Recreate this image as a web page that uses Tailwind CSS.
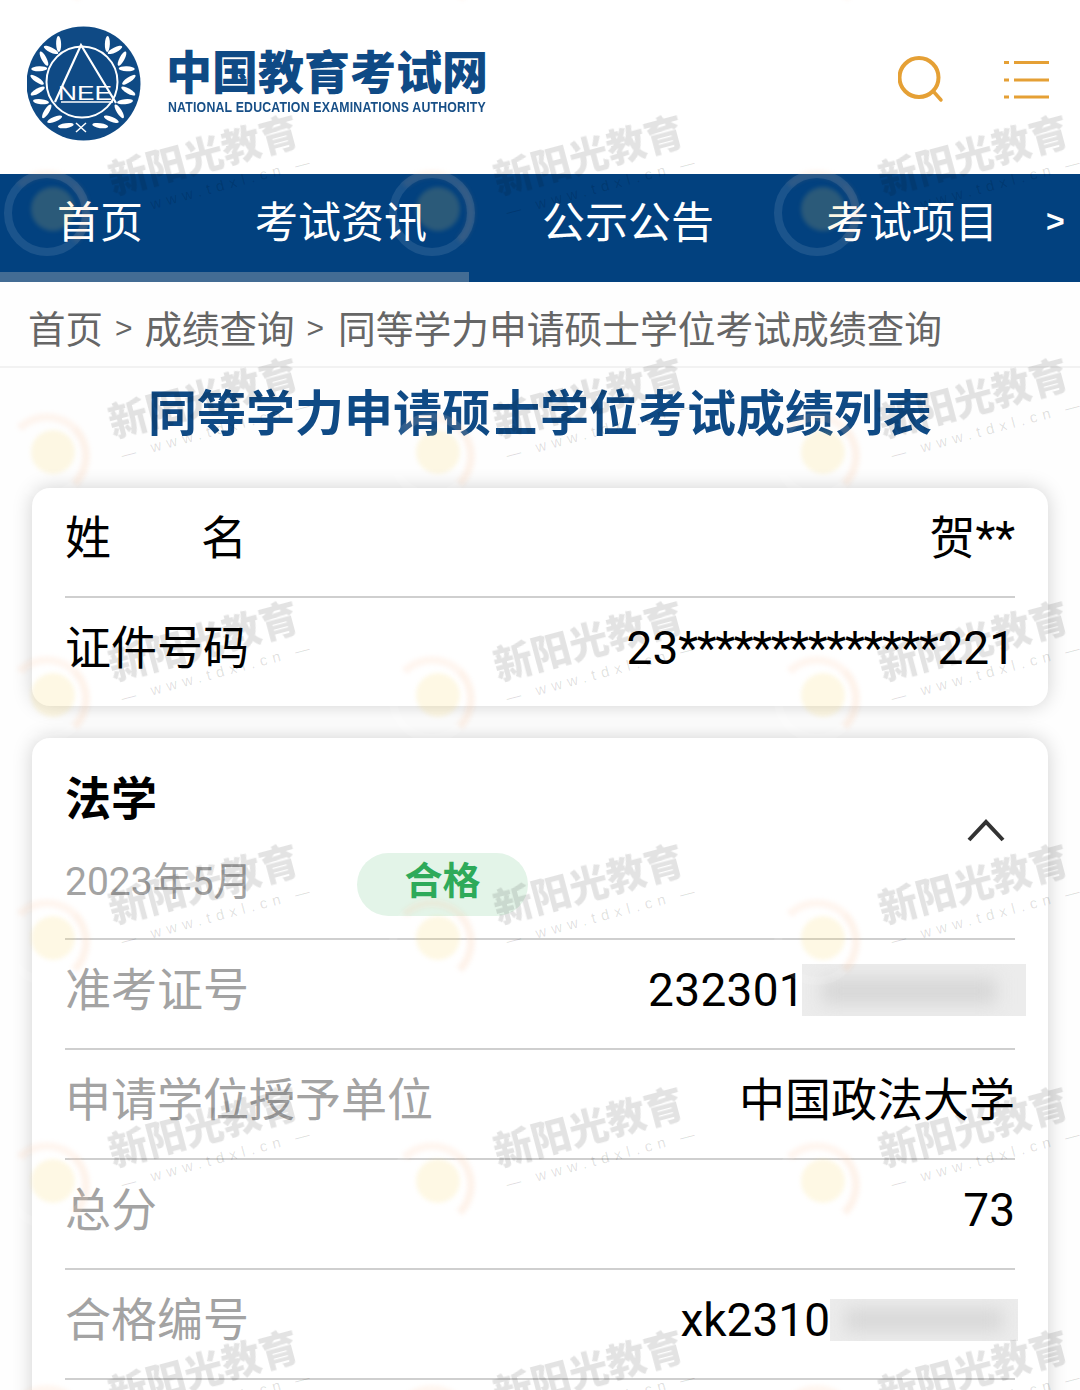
<!DOCTYPE html>
<html lang="zh-CN">
<head>
    <meta charset="UTF-8">
    <title>中国教育考试网 - 成绩查询</title>
    <script src="https://cdn.jsdelivr.net/npm/@tailwindcss/browser@4"></script>
</head>
<body class="bg-white">
<div class="relative w-[1080px] h-[1390px] overflow-hidden bg-[#fefefe] font-['Roboto','Noto_Sans_CJK_SC',sans-serif] text-black">

    <!-- 页头 -->
    <header class="h-[174px] flex items-start justify-between bg-white">
        <div class="flex items-start pl-[27px] pt-[26px]">
            <svg class="w-[114px] h-[116px]" viewBox="27 26 114 116">
                <circle cx="83.500" cy="83.500" r="57" fill="#0f4a85"/>
                <circle cx="82" cy="82" r="35.500" fill="none" stroke="#fff" stroke-width="2"/>
                <g fill="#fff" transform="translate(-1 -1)">
                    <ellipse cx="84" cy="38" rx="2.500" ry="8" transform="rotate(-32 84 84) rotate(30 84 38)"/>
                    <ellipse cx="84" cy="38" rx="2.500" ry="8" transform="rotate(-44 84 84) rotate(-20 84 38)"/>
                    <ellipse cx="84" cy="38" rx="2.500" ry="8" transform="rotate(-58 84 84) rotate(30 84 38)"/>
                    <ellipse cx="84" cy="38" rx="2.500" ry="8" transform="rotate(-72 84 84) rotate(-20 84 38)"/>
                    <ellipse cx="84" cy="38" rx="2.500" ry="8" transform="rotate(-86 84 84) rotate(30 84 38)"/>
                    <ellipse cx="84" cy="38" rx="2.500" ry="8" transform="rotate(-100 84 84) rotate(-20 84 38)"/>
                    <ellipse cx="84" cy="38" rx="2.500" ry="8" transform="rotate(-114 84 84) rotate(30 84 38)"/>
                    <ellipse cx="84" cy="38" rx="2.500" ry="8" transform="rotate(-128 84 84) rotate(-20 84 38)"/>
                    <ellipse cx="84" cy="38" rx="2.500" ry="8" transform="rotate(-142 84 84) rotate(30 84 38)"/>
                    <ellipse cx="84" cy="38" rx="2.500" ry="8" transform="rotate(-158 84 84) rotate(60 84 38)"/>
                    <ellipse cx="84" cy="38" rx="2.500" ry="8" transform="rotate(32 84 84) rotate(-30 84 38)"/>
                    <ellipse cx="84" cy="38" rx="2.500" ry="8" transform="rotate(44 84 84) rotate(20 84 38)"/>
                    <ellipse cx="84" cy="38" rx="2.500" ry="8" transform="rotate(58 84 84) rotate(-30 84 38)"/>
                    <ellipse cx="84" cy="38" rx="2.500" ry="8" transform="rotate(72 84 84) rotate(20 84 38)"/>
                    <ellipse cx="84" cy="38" rx="2.500" ry="8" transform="rotate(86 84 84) rotate(-30 84 38)"/>
                    <ellipse cx="84" cy="38" rx="2.500" ry="8" transform="rotate(100 84 84) rotate(20 84 38)"/>
                    <ellipse cx="84" cy="38" rx="2.500" ry="8" transform="rotate(114 84 84) rotate(-30 84 38)"/>
                    <ellipse cx="84" cy="38" rx="2.500" ry="8" transform="rotate(128 84 84) rotate(20 84 38)"/>
                    <ellipse cx="84" cy="38" rx="2.500" ry="8" transform="rotate(142 84 84) rotate(-30 84 38)"/>
                    <ellipse cx="84" cy="38" rx="2.500" ry="8" transform="rotate(158 84 84) rotate(-60 84 38)"/>
                </g>
                <path d="M76 132l10-9M86 132l-10-9" stroke="#fff" stroke-width="1.500"/>
                <path d="M55 102L81 45L116 103" fill="none" stroke="#fff" stroke-width="2.200"/>
                <path d="M61 102H113" fill="none" stroke="#fff" stroke-width="1.500"/>
                <text x="85" y="100" text-anchor="middle" fill="#fff" font-family="Liberation Sans" font-size="21" textLength="54" lengthAdjust="spacingAndGlyphs">NEE</text>
            </svg>
            <div class="ml-[25px] pt-[15px] text-[#0f4a85]">
                <div class="w-[322px] text-[46px] leading-[56px] font-black whitespace-nowrap font-['Noto_Sans_CJK_SC',sans-serif]">中国教育考试网</div>
                <div class="mt-[1px] ml-[2px] origin-left scale-x-[0.82] text-[15px] leading-[18px] font-bold whitespace-nowrap font-['Liberation_Sans',sans-serif] tracking-[0.25px] text-[#174f87]">NATIONAL EDUCATION EXAMINATIONS AUTHORITY</div>
            </div>
        </div>
        <div class="flex items-start pt-[54px] pr-[31px]">
            <svg class="w-[48px] h-[52px] text-[#e5a035]" viewBox="0 0 48 52" fill="none" stroke="currentColor">
                <circle cx="21" cy="23.500" r="19.500" stroke-width="4"/>
                <path d="M35 37l8 9" stroke-width="3.500" stroke-linecap="round"/>
            </svg>
            <svg class="w-[46px] h-[44px] ml-[57px] mt-[3px] text-[#e5a035]" viewBox="0 0 46 44" fill="none" stroke="currentColor" stroke-width="3">
                <path d="M1 5.500h5M11 5.500h35M1 23h5M11 23h35M1 40h5M11 40h35"/>
            </svg>
        </div>
    </header>

    <!-- 导航 -->
    <nav class="relative h-[108px] bg-[#02417f] text-white font-['Noto_Sans_CJK_SC',sans-serif]">
        <div class="flex items-center h-[98px] pb-[8px] text-[43px] whitespace-nowrap">
            <a class="ml-[57px]">首页</a>
            <a class="ml-[112px]">考试资讯</a>
            <a class="ml-[115px]">公示公告</a>
            <a class="ml-[112px]">考试项目</a>
            <a class="ml-[48px] pt-[4px] text-[32px] font-bold font-['Liberation_Sans',sans-serif]">&gt;</a>
        </div>
        <div class="h-[10px] w-[469px] bg-[#436c94]"></div>
    </nav>

    <!-- 面包屑 -->
    <div class="h-[86px] flex items-center pl-[28px] pt-[6px] border-b-2 border-[#f2f2f2] text-[37.500px] text-[#666] whitespace-pre font-['Noto_Sans_CJK_SC',sans-serif]">首页<span class="mx-[12px] text-[30px] font-['Liberation_Sans',sans-serif]">&gt;</span>成绩查询<span class="ml-[12px] mr-[14px] text-[30px] font-['Liberation_Sans',sans-serif]">&gt;</span><span class="text-[37.750px]">同等学力申请硕士学位考试成绩查询</span></div>

    <h1 class="h-[120px] pt-[14px] text-center text-[49px] leading-[66px] font-bold text-[#0f4a85] whitespace-nowrap">同等学力申请硕士学位考试成绩列表</h1>

    <main class="px-[32px]">
        <section class="rounded-[18px] bg-white shadow-[0_0_20px_rgba(0,0,0,0.18)] px-[33px] text-[46px] mb-[32px]">
            <div class="h-[110px] pb-[8px] flex items-center justify-between border-b-2 border-[#cfcfcf]">
                <span class="w-[182px] flex justify-between"><span>姓</span><span>名</span></span>
                <span>贺**</span>
            </div>
            <div class="h-[108px] pb-[8px] flex items-center justify-between">
                <span>证件号码</span>
                <span>23<span class="tracking-[-1.300px]">**************</span>221</span>
            </div>
        </section>

        <section class="rounded-[18px] bg-white shadow-[0_0_20px_rgba(0,0,0,0.18)] px-[33px] text-[46px] h-[700px]">
            <div class="relative h-[202px] border-b-2 border-[#cfcfcf]">
                <div class="pt-[27px] font-bold leading-[68px]">法学</div>
                <div class="mt-[20px] flex items-center h-[63px]">
                    <span class="w-[292px] text-[39px] text-[#a3a3a3] -mt-[5px]">2023年5月</span>
                    <span class="w-[171px] h-[63px] pb-[6px] rounded-full bg-[#e3f4e8] text-[#2eaa5a] text-[38px] font-bold flex items-center justify-center">合格</span>
                </div>
                <svg class="absolute right-[10px] top-[79px] w-[38px] h-[26px] text-[#333]" viewBox="0 0 38 26" fill="none" stroke="currentColor" stroke-width="4">
                    <path d="M2 23L19 5L36 23"/>
                </svg>
            </div>
            <div class="h-[110px] pb-[8px] flex items-center justify-between border-b-2 border-[#cfcfcf]">
                <span class="text-[#a3a3a3]">准考证号</span>
                <span class="flex items-center tracking-[0.3px]">232301<span class="relative -ml-[3px] -mr-[11px] w-[224px] h-[52px] overflow-hidden bg-[#ececec]"><span class="absolute left-[20px] right-[30px] top-[14px] bottom-[12px] bg-[#d6d6d6] blur-[9px]"></span></span></span>
            </div>
            <div class="h-[110px] pb-[8px] flex items-center justify-between border-b-2 border-[#cfcfcf]">
                <span class="text-[#a3a3a3]">申请学位授予单位</span>
                <span>中国政法大学</span>
            </div>
            <div class="h-[110px] pb-[8px] flex items-center justify-between border-b-2 border-[#cfcfcf]">
                <span class="text-[#a3a3a3]">总分</span>
                <span>73</span>
            </div>
            <div class="h-[110px] pb-[8px] flex items-center justify-between border-b-2 border-[#cfcfcf]">
                <span class="text-[#a3a3a3]">合格编号</span>
                <span class="flex items-center">xk2310<span class="relative -mr-[3px] w-[188px] h-[42px] overflow-hidden bg-[#ececec]"><span class="absolute left-[15px] right-[15px] top-[10px] bottom-[10px] bg-[#d6d6d6] blur-[9px]"></span></span></span>
            </div>
        </section>
    </main>

    <!-- 水印 -->
    <div id="wm" class="absolute left-0 top-[-143px] w-[1155px] grid grid-cols-[repeat(3,385px)] auto-rows-[243px] pointer-events-none"></div>
    <template id="wm-tile">
        <div class="relative h-[243px]">
            <div class="absolute left-[4px] top-[70px] w-[86px] h-[86px] rounded-full border-[8px] border-white/[0.10]"></div>
            <div class="absolute left-[4px] top-[70px] w-[86px] h-[86px] rounded-full border-[8px] border-transparent border-t-[#f59a5a]/[0.09] border-r-[#f59a5a]/[0.12] blur-[2px]"></div>
            <div class="absolute left-[31px] top-[87px] w-[44px] h-[44px] rounded-full bg-[#fcd860]/[0.17] blur-[2px]"></div>
            <div class="absolute left-[108px] top-[30px] w-[196px] -rotate-[15deg] text-center whitespace-nowrap font-['Noto_Sans_CJK_SC',sans-serif]">
                <div class="text-[39px] leading-[44px] font-black text-black/[0.11] blur-[0.6px]">新阳光教育</div>
                <div class="mt-[5px] ml-[4px] text-[15px] leading-[20px] tracking-[5.500px] text-black/[0.13] font-['Liberation_Sans',sans-serif]">— www.tdxl.cn —</div>
            </div>
        </div>
    </template>
    <script>
        // 平铺水印
        var wm = document.getElementById('wm');
        var tile = document.getElementById('wm-tile');
        for (var i = 0; i < 21; i++) {
            wm.appendChild(tile.content.cloneNode(true));
        }
    </script>
</div>
</body>
</html>
